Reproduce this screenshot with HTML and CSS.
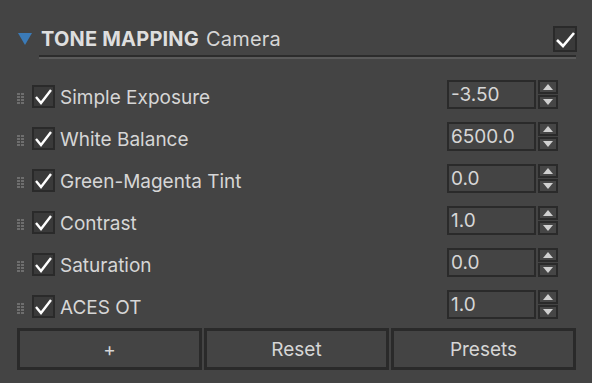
FILE: index.html
```html
<!DOCTYPE html>
<html>
<head>
<meta charset="utf-8">
<link rel="stylesheet" href="styles.css">
</head>
<body>
<div class="panel">
  <div class="header">
    <svg class="tri" width="14" height="12" viewBox="0 0 14 12"><polygon points="0,0 14,0 7,12" fill="#3b7bb8"/></svg>
    <span class="title">TONE MAPPING</span><span class="sub">Camera</span>
    <span class="hcheck"><svg width="20" height="20" viewBox="0 0 20 20"><polyline points="2,11 8,17 19,4" fill="none" stroke="#fff" stroke-width="2.6"/></svg></span>
  </div>
  <div class="sep"></div>
  <div class="rows">
    <div class="row">
      <svg class="grip" width="7" height="11" viewBox="0 0 7 11"><g fill="#6e6e6e"><rect x="0" y="0" width="3" height="2"/><rect x="4" y="0" width="3" height="2"/><rect x="0" y="3" width="3" height="2"/><rect x="4" y="3" width="3" height="2"/><rect x="0" y="6" width="3" height="2"/><rect x="4" y="6" width="3" height="2"/><rect x="0" y="9" width="3" height="2"/><rect x="4" y="9" width="3" height="2"/></g></svg>
      <span class="check"><svg width="19" height="19" viewBox="0 0 19 19"><polyline points="2,10 7,16 17,3" fill="none" stroke="#fff" stroke-width="2.4"/></svg></span>
      <span class="label">Simple Exposure</span>
      <span class="field">-3.50</span>
      <span class="spin"><span class="sb"><svg width="10" height="6" viewBox="0 0 10 6"><polygon points="0,6 10,6 5,0" fill="#d0d0d0"/></svg></span><span class="sb"><svg width="10" height="6" viewBox="0 0 10 6"><polygon points="0,0 10,0 5,6" fill="#d0d0d0"/></svg></span></span>
    </div>
    <div class="row">
      <svg class="grip" width="7" height="11" viewBox="0 0 7 11"><g fill="#6e6e6e"><rect x="0" y="0" width="3" height="2"/><rect x="4" y="0" width="3" height="2"/><rect x="0" y="3" width="3" height="2"/><rect x="4" y="3" width="3" height="2"/><rect x="0" y="6" width="3" height="2"/><rect x="4" y="6" width="3" height="2"/><rect x="0" y="9" width="3" height="2"/><rect x="4" y="9" width="3" height="2"/></g></svg>
      <span class="check"><svg width="19" height="19" viewBox="0 0 19 19"><polyline points="2,10 7,16 17,3" fill="none" stroke="#fff" stroke-width="2.4"/></svg></span>
      <span class="label">White Balance</span>
      <span class="field">6500.0</span>
      <span class="spin"><span class="sb"><svg width="10" height="6" viewBox="0 0 10 6"><polygon points="0,6 10,6 5,0" fill="#d0d0d0"/></svg></span><span class="sb"><svg width="10" height="6" viewBox="0 0 10 6"><polygon points="0,0 10,0 5,6" fill="#d0d0d0"/></svg></span></span>
    </div>
    <div class="row">
      <svg class="grip" width="7" height="11" viewBox="0 0 7 11"><g fill="#6e6e6e"><rect x="0" y="0" width="3" height="2"/><rect x="4" y="0" width="3" height="2"/><rect x="0" y="3" width="3" height="2"/><rect x="4" y="3" width="3" height="2"/><rect x="0" y="6" width="3" height="2"/><rect x="4" y="6" width="3" height="2"/><rect x="0" y="9" width="3" height="2"/><rect x="4" y="9" width="3" height="2"/></g></svg>
      <span class="check"><svg width="19" height="19" viewBox="0 0 19 19"><polyline points="2,10 7,16 17,3" fill="none" stroke="#fff" stroke-width="2.4"/></svg></span>
      <span class="label">Green-Magenta Tint</span>
      <span class="field">0.0</span>
      <span class="spin"><span class="sb"><svg width="10" height="6" viewBox="0 0 10 6"><polygon points="0,6 10,6 5,0" fill="#d0d0d0"/></svg></span><span class="sb"><svg width="10" height="6" viewBox="0 0 10 6"><polygon points="0,0 10,0 5,6" fill="#d0d0d0"/></svg></span></span>
    </div>
    <div class="row">
      <svg class="grip" width="7" height="11" viewBox="0 0 7 11"><g fill="#6e6e6e"><rect x="0" y="0" width="3" height="2"/><rect x="4" y="0" width="3" height="2"/><rect x="0" y="3" width="3" height="2"/><rect x="4" y="3" width="3" height="2"/><rect x="0" y="6" width="3" height="2"/><rect x="4" y="6" width="3" height="2"/><rect x="0" y="9" width="3" height="2"/><rect x="4" y="9" width="3" height="2"/></g></svg>
      <span class="check"><svg width="19" height="19" viewBox="0 0 19 19"><polyline points="2,10 7,16 17,3" fill="none" stroke="#fff" stroke-width="2.4"/></svg></span>
      <span class="label">Contrast</span>
      <span class="field">1.0</span>
      <span class="spin"><span class="sb"><svg width="10" height="6" viewBox="0 0 10 6"><polygon points="0,6 10,6 5,0" fill="#d0d0d0"/></svg></span><span class="sb"><svg width="10" height="6" viewBox="0 0 10 6"><polygon points="0,0 10,0 5,6" fill="#d0d0d0"/></svg></span></span>
    </div>
    <div class="row">
      <svg class="grip" width="7" height="11" viewBox="0 0 7 11"><g fill="#6e6e6e"><rect x="0" y="0" width="3" height="2"/><rect x="4" y="0" width="3" height="2"/><rect x="0" y="3" width="3" height="2"/><rect x="4" y="3" width="3" height="2"/><rect x="0" y="6" width="3" height="2"/><rect x="4" y="6" width="3" height="2"/><rect x="0" y="9" width="3" height="2"/><rect x="4" y="9" width="3" height="2"/></g></svg>
      <span class="check"><svg width="19" height="19" viewBox="0 0 19 19"><polyline points="2,10 7,16 17,3" fill="none" stroke="#fff" stroke-width="2.4"/></svg></span>
      <span class="label">Saturation</span>
      <span class="field">0.0</span>
      <span class="spin"><span class="sb"><svg width="10" height="6" viewBox="0 0 10 6"><polygon points="0,6 10,6 5,0" fill="#d0d0d0"/></svg></span><span class="sb"><svg width="10" height="6" viewBox="0 0 10 6"><polygon points="0,0 10,0 5,6" fill="#d0d0d0"/></svg></span></span>
    </div>
    <div class="row">
      <svg class="grip" width="7" height="11" viewBox="0 0 7 11"><g fill="#6e6e6e"><rect x="0" y="0" width="3" height="2"/><rect x="4" y="0" width="3" height="2"/><rect x="0" y="3" width="3" height="2"/><rect x="4" y="3" width="3" height="2"/><rect x="0" y="6" width="3" height="2"/><rect x="4" y="6" width="3" height="2"/><rect x="0" y="9" width="3" height="2"/><rect x="4" y="9" width="3" height="2"/></g></svg>
      <span class="check"><svg width="19" height="19" viewBox="0 0 19 19"><polyline points="2,10 7,16 17,3" fill="none" stroke="#fff" stroke-width="2.4"/></svg></span>
      <span class="label">ACES OT</span>
      <span class="field">1.0</span>
      <span class="spin"><span class="sb"><svg width="10" height="6" viewBox="0 0 10 6"><polygon points="0,6 10,6 5,0" fill="#d0d0d0"/></svg></span><span class="sb"><svg width="10" height="6" viewBox="0 0 10 6"><polygon points="0,0 10,0 5,6" fill="#d0d0d0"/></svg></span></span>
    </div>
  </div>
  <div class="buttons">
    <button class="btn">+</button>
    <button class="btn">Reset</button>
    <button class="btn">Presets</button>
  </div>
</div>
</body>
</html>
```
FILE: styles.css
```css
html, body {
  margin: 0;
  padding: 0;
  background: #444444;
  width: 592px;
  height: 383px;
  overflow: hidden;
}
.panel {
  padding: 25px 16px 0 17px;
  font-family: Inter, "Noto Sans", sans-serif;
  color: #d6d6d6;
}
.header {
  display: flex;
  align-items: center;
  height: 27px;
}
.tri {
  margin-left: 1px;
  margin-right: 9px;
  margin-top: 1px;
}
.title {
  font-weight: 700;
  font-size: 20px;
  color: #dedede;
  letter-spacing: 0.2px;
}
.sub {
  font-size: 20px;
  margin-left: 7px;
  flex: 1;
  letter-spacing: 0.2px;
}
.hcheck {
  width: 20px;
  height: 22px;
  border: 2px solid #2a2a2a;
  background: #3a3a3a;
  display: flex;
  align-items: center;
  justify-content: center;
  margin-right: -1px;
}
.sep {
  margin: 3px 0 0 22px;
  height: 0;
  border-top: 2px solid #2c2c2c;
  border-bottom: 2px solid #5a5a5a;
}
.rows {
  margin-top: 21px;
  display: flex;
  flex-direction: column;
  gap: 13px;
}
.row {
  display: flex;
  align-items: flex-start;
  height: 29px;
}
.grip {
  margin-top: 13px;
  margin-right: 8px;
}
.check {
  margin-top: 5px;
  width: 19px;
  height: 19px;
  border: 2px solid #2a2a2a;
  background: #3a3a3a;
  display: flex;
  align-items: center;
  justify-content: center;
}
.label {
  flex: 1;
  font-size: 19px;
  line-height: 29px;
  padding-top: 3px;
  margin-left: 5px;
}
.field {
  box-sizing: border-box;
  width: 89px;
  height: 29px;
  border: 2px solid #2a2a2a;
  font-size: 19px;
  line-height: 25px;
  padding-left: 2px;
}
.spin {
  margin-left: 2px;
  margin-right: 18px;
  display: flex;
  flex-direction: column;
  gap: 1px;
}
.sb {
  box-sizing: border-box;
  width: 20px;
  height: 14px;
  border: 2px solid #2a2a2a;
  background: #464646;
  display: flex;
  align-items: center;
  justify-content: center;
}
.buttons {
  margin-top: 9px;
  display: flex;
  gap: 2px;
}
.btn {
  flex: 1;
  height: 42px;
  background: #444444;
  border: 3px solid #2a2a2a;
  color: #d6d6d6;
  font-family: Inter, "Noto Sans", sans-serif;
  font-size: 19px;
  padding: 0;
}
```
